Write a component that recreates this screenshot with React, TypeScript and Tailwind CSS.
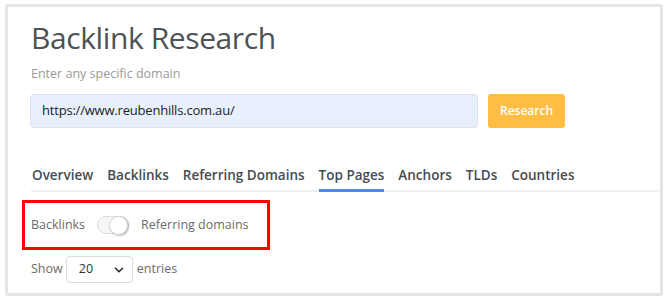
import { ChevronDown } from "lucide-react";

const tabs = ["Overview", "Backlinks", "Referring Domains", "Top Pages", "Anchors", "TLDs", "Countries"];

export default function App() {
  const active = "Top Pages";

  return (
    <div className="w-[670px] h-[300px] bg-white pt-[4px] pl-[5px] font-['Open_Sans',sans-serif]">
      <div className="w-[658px] h-[292px] border-[3px] border-[#e5e5e5] rounded-[3px] pt-[11px] pl-[23px] pr-[1px]">
        {/* Title */}
        <h1 className="text-[30px] leading-[40px] tracking-[-0.4px] text-[#4d5256] font-normal">Backlink Research</h1>
        <p className="mt-[6px] text-[12.5px] leading-[20px] text-[#9a9a9a]">Enter any specific domain</p>

        {/* Search row */}
        <div className="mt-[10px] flex items-center gap-[10px]">
          <div className="w-[448px] h-[34px] ml-[-1px] flex items-center px-[11px] bg-[#e8f0fe] border border-[#dde2ea] rounded-[4px] text-[13px] tracking-[-0.2px] text-[#222]">
            https://www.reubenhills.com.au/
          </div>
          <button className="w-[77px] h-[34px] bg-[#ffbd45] rounded-[3px] text-white text-[12px] font-semibold">
            Research
          </button>
        </div>

        {/* Tabs */}
        <div className="mt-[37px] flex gap-[14px] pl-px border-b-2 border-[#eeeeee]">
          {tabs.map((t) => (
            <div
              key={t}
              className={
                "pb-[4px] mb-[-2px] border-b-[3px] text-[13.5px] leading-[20px] font-semibold text-[#464c52] " +
                (t === active ? "border-[#4a90e2]" : "border-transparent")
              }
            >
              {t}
            </div>
          ))}
        </div>

        {/* Toggle (annotated) */}
        <div className="mt-[8px] ml-[-9px] w-[248px] h-[50px] border-[3px] border-[#ff0000] flex items-center pl-[6px] text-[12.5px] text-[#6b6b6b]">
          <span>Backlinks</span>
          <div className="ml-[12px] w-[32px] h-[18px] rounded-full border border-[#dcdcdc] bg-[#f6f6f6] flex items-center justify-end">
            <div className="w-[19px] h-[19px] rounded-full bg-white border border-[#d6d6d6] shadow-[1px_1px_2px_rgba(0,0,0,0.25)]" />
          </div>
          <span className="ml-[12px]">Referring domains</span>
        </div>

        {/* Show entries */}
        <div className="mt-[6px] flex items-center text-[12.5px] text-[#6b6b6b]">
          <span>Show</span>
          <div className="ml-[3px] w-[67px] h-[27px] border border-[#dddddd] rounded-[4px] flex items-center justify-between pl-[12px] pr-[6px] text-[#333]">
            <span>20</span>
            <ChevronDown size={14} strokeWidth={3} className="text-[#333]" />
          </div>
          <span className="ml-[4px]">entries</span>
        </div>
      </div>
    </div>
  );
}
